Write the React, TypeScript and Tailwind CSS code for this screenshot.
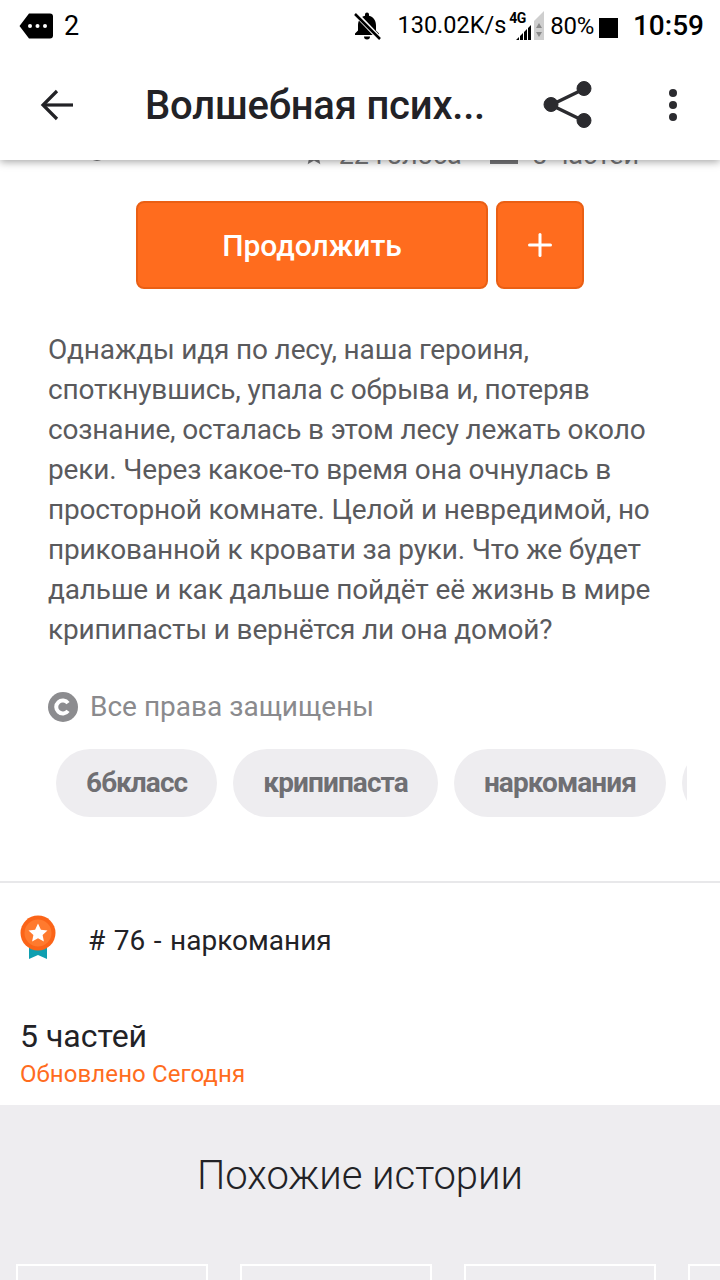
import { Plus } from "lucide-react";

const description = [
  "Однажды идя по лесу, наша героиня,",
  "споткнувшись, упала с обрыва и, потеряв",
  "сознание, осталась в этом лесу лежать около",
  "реки. Через какое-то время она очнулась в",
  "просторной комнате. Целой и невредимой, но",
  "прикованной к кровати за руки. Что же будет",
  "дальше и как дальше пойдёт её жизнь в мире",
  "крипипасты и вернётся ли она домой?",
];

const tags = ["6бкласс", "крипипаста", "наркомания"];

function StatusBar() {
  return (
    <div className="flex h-[52px] items-center justify-between pl-[19px] pr-[16px] text-black">
      <div className="flex items-center gap-[11px]">
        <svg width="34" height="26" viewBox="0 0 34 26">
          <path d="M10 0.5H31a3 3 0 0 1 3 3V22.5a3 3 0 0 1-3 3H10L0.5 13Z" fill="#000" />
          <circle cx="11" cy="13" r="2" fill="#fff" />
          <circle cx="18.5" cy="13" r="2" fill="#fff" />
          <circle cx="26" cy="13" r="2" fill="#fff" />
        </svg>
        <span className="text-[27px] leading-none">2</span>
      </div>
      <div className="flex items-center">
        <svg width="28" height="30" viewBox="0 0 28 30" className="mr-[16px]">
          <path d="M14 1.5a2 2 0 0 1 2 2v1.3c4.5 1 7 5 7 9.700v5l3 3v1.500H2v-1.500l3-3v-5c0-4.700 2.500-8.700 7-9.700V3.500a2 2 0 0 1 2-2Z" fill="#000" />
          <path d="M11 25.500h6a3 3 0 0 1-6 0Z" fill="#000" />
          <path d="M3 3l24 25" stroke="#fff" strokeWidth="5" />
          <path d="M2 3l25 25" stroke="#000" strokeWidth="2.500" />
        </svg>
        <span className="text-[23.5px] leading-none">130.02K/s</span>
        <div className="relative ml-[3px] h-[30px] w-[35px]">
          <span className="absolute left-0 top-0 text-[14px] font-bold leading-none tracking-[-0.5px]">4G</span>
          <svg width="35" height="30" viewBox="0 0 35 30" className="absolute left-0 top-0">
            <path d="M25 29V10l10-10v29Z" fill="#cfcfcf" />
            <path d="M7 29l3-3v3Zm4-4l3-3v7h-3Zm4-4l3-3v11h-3Zm4-4l3-3v15h-3Z" fill="#000" />
            <path d="M30 12l3 5h-6Z M30 26l-3-5h6Z" fill="#8a8a8a" />
          </svg>
        </div>
        <span className="ml-[6px] text-[24px] leading-none tracking-[-0.3px]">80%</span>
        <div className="ml-[5px] h-[20px] w-[19px] translate-y-[2px] bg-black" />
        <span className="ml-[15px] text-[28px] font-medium leading-none">10:59</span>
      </div>
    </div>
  );
}

function Toolbar() {
  return (
    <div className="flex h-[108px] items-center pb-[3px] text-[#222226]">
      <div className="flex w-[145px] justify-start pl-[40px]">
        <svg width="34" height="32" viewBox="0 0 34 32" fill="none" stroke="#222226" strokeWidth="3.200">
          <path d="M33 16H3" />
          <path d="M17 2L3 16l14 14" />
        </svg>
      </div>
      <div className="flex-1 pt-[2px] text-[40px] font-medium leading-none tracking-[-0.2px]">Волшебная псих...</div>
      <svg width="50" height="48" viewBox="0 0 50 48" className="mr-[76px]" fill="#2b2b2f" stroke="#2b2b2f">
        <path d="M8 24L41 8M8 24l33 16" strokeWidth="3.500" fill="none" />
        <circle cx="8" cy="23.500" r="7" />
        <circle cx="41" cy="7.500" r="7" />
        <circle cx="41" cy="39.500" r="7" />
      </svg>
      <div className="mr-[43px] flex flex-col gap-[4px]">
        <div className="h-[8px] w-[8px] rounded-full bg-[#2b2b2f]" />
        <div className="h-[8px] w-[8px] rounded-full bg-[#2b2b2f]" />
        <div className="h-[8px] w-[8px] rounded-full bg-[#2b2b2f]" />
      </div>
    </div>
  );
}

function StatsRow() {
  return (
    <div className="mt-[-20px] flex h-[30px] items-center justify-between pl-[88px] pr-[81px] text-[27px] leading-none text-[#77777a]">
      <div className="h-[18px] w-[18px] -translate-y-[3px] rounded-full border-2 border-[#77777a]" />
      <div className="flex items-center">
        <svg width="20" height="20" viewBox="0 0 20 20" fill="#77777a">
          <path d="M10 0l3 7 7 .6-5.300 4.700 1.600 7L10 15.500 3.700 19.300l1.600-7L0 7.600 7 7Z" />
        </svg>
        <span className="ml-[15px]">22 голоса</span>
        <div className="ml-[28px] flex flex-col gap-[3px]">
          <div className="h-[3px] w-[28px] bg-[#77777a]" />
          <div className="h-[3px] w-[28px] bg-[#77777a]" />
          <div className="h-[5px] w-[28px] bg-[#77777a]" />
        </div>
        <span className="ml-[14px]">5 частей</span>
      </div>
    </div>
  );
}

function Medal() {
  return (
    <svg width="36" height="44" viewBox="0 0 36 44">
      <path d="M9 30H27V44L18 40L9 44Z" fill="#0f9fb0" />
      <circle cx="18" cy="18" r="17.500" fill="#fb6418" />
      <circle cx="18" cy="18" r="13.500" fill="#ff7a2e" />
      <path d="M18 8.500l2.900 6.200 6.600 0.800-4.900 4.500 1.300 6.600-5.900-3.300-5.900 3.300 1.300-6.600-4.900-4.500 6.600-0.800Z" fill="#fff" />
    </svg>
  );
}

export default function App() {
  return (
    <div className="h-[1280px] w-[720px] overflow-hidden bg-white font-['Roboto',sans-serif]">
      <header className="relative z-10 h-[160px] bg-white shadow-[0_2px_8px_rgba(0,0,0,0.35)]">
        <StatusBar />
        <Toolbar />
      </header>

      <StatsRow />

      <div className="mt-[31px] flex justify-center gap-[8px]">
        <button
          type="button"
          className="flex h-[88px] w-[352px] items-center justify-center rounded-[8px] border-2 border-[#ea5f14] bg-[#ff6c1e] pt-[1px] text-[30px] font-medium text-white"
        >
          Продолжить
        </button>
        <button
          type="button"
          className="flex h-[88px] w-[88px] items-center justify-center rounded-[8px] border-2 border-[#ea5f14] bg-[#ff6c1e] text-white"
        >
          <Plus size={36} strokeWidth={2} />
        </button>
      </div>

      <div className="mt-[41px] px-[48px] text-[28px] leading-[40px] tracking-[-0.16px] text-[#5a5a5d]">
        {description.map((line) => (
          <div key={line} className="whitespace-nowrap">
            {line}
          </div>
        ))}
      </div>

      <div className="mt-[37px] flex items-center gap-[12px] pl-[48px]">
        <div className="flex h-[30px] w-[30px] items-center justify-center rounded-full bg-[#8c8c8f]">
          <svg width="20" height="20" viewBox="0 0 20 20" fill="none" stroke="#fff" strokeWidth="4">
            <path d="M15 6.200a6.500 6.500 0 1 0 0 7.600" />
          </svg>
        </div>
        <span className="text-[28px] leading-[40px] text-[#8a8a8d]">Все права защищены</span>
      </div>

      <div className="mt-[22px] w-[687px] overflow-hidden pl-[56px]">
        <div className="flex gap-[16px]">
          {tags.map((tag) => (
            <div
              key={tag}
              className="flex h-[68px] shrink-0 items-center rounded-full bg-[#eeedf0] px-[30px] text-[28px] font-bold tracking-[-0.9px] text-[#6f6f73]"
            >
              {tag}
            </div>
          ))}
          <div className="h-[68px] w-[120px] shrink-0 rounded-full bg-[#eeedf0]" />
        </div>
      </div>

      <div className="mt-[64px] h-[2px] bg-[#e8e8ea]" />

      <div className="mt-[32px] flex items-start pl-[20px]">
        <Medal />
        <span className="ml-[32px] pt-[2px] text-[28px] leading-[48px] text-[#222226] [word-spacing:1.6px]">
          # 76 - наркомания
        </span>
      </div>

      <div className="mt-[51px] pl-[20px]">
        <div className="text-[32px] leading-[40px] text-[#222226]">5 частей</div>
        <div className="mt-[2px] text-[24px] leading-[32px] tracking-[0.1px] text-[#ff6c1e]">Обновлено Сегодня</div>
      </div>

      <section className="mt-[15px] h-[200px] bg-[#eeedf0]">
        <h2 className="pt-[45px] text-center text-[40px] font-light leading-[52px] text-[#222226]">
          Похожие истории
        </h2>
        <div className="mt-[62px] flex gap-[32px] pl-[16px]">
          {[0, 1, 2, 3].map((card) => (
            <div key={card} className="h-[200px] w-[192px] shrink-0 border-2 border-white" />
          ))}
        </div>
      </section>
    </div>
  );
}
